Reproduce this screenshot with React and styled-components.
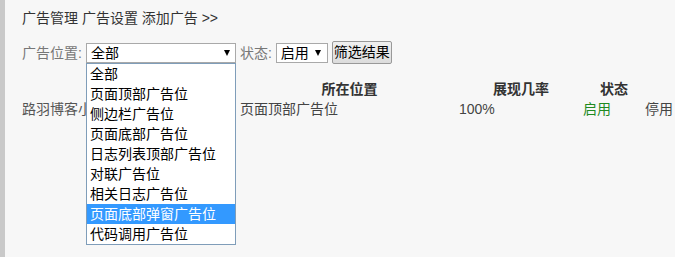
import React from "react";
import styled, { createGlobalStyle } from "styled-components";

const GlobalStyle = createGlobalStyle`
  html, body {
    margin: 0;
    padding: 0;
    background: #f7f7f7;
  }
  body {
    font-family: "Liberation Sans", "Noto Sans CJK SC", sans-serif;
    font-size: 14px;
    color: #333;
  }
`;

const positions = [
  "全部",
  "页面顶部广告位",
  "侧边栏广告位",
  "页面底部广告位",
  "日志列表顶部广告位",
  "对联广告位",
  "相关日志广告位",
  "页面底部弹窗广告位",
  "代码调用广告位",
];

const App = () => {
  return (
    <>
      <GlobalStyle />
      <StPage>
        <StCrumbs>广告管理 广告设置 添加广告 &gt;&gt;</StCrumbs>

        <StFilterBar>
          <StLabel>广告位置:</StLabel>
          <StSelectWrap>
            <StSelect $width={150}>
              <span>全部</span>
              <StArrow />
            </StSelect>
            {/* opened list, lies over the table */}
            <StOptions>
              {positions.map((p, i) => (
                <StOption key={p} $active={i === 7}>
                  {p}
                </StOption>
              ))}
            </StOptions>
          </StSelectWrap>
          <StLabel>状态:</StLabel>
          <StSelect $width={52} $tight>
            <span>启用</span>
            <StArrow />
          </StSelect>
          <StButton>筛选结果</StButton>
        </StFilterBar>

        <StTable>
          <StHead />
          <StHead>所在位置</StHead>
          <StHead>展现几率</StHead>
          <StHead>状态</StHead>
          <StHead />

          <StCell $color="#555">路羽博客小工具</StCell>
          <StCell>页面顶部广告位</StCell>
          <StCell>100%</StCell>
          <StCell $color="#1f8a1f">启用</StCell>
          <StCell>停用</StCell>
        </StTable>
      </StPage>
    </>
  );
};

export default App;

const StPage = styled.div`
  min-height: 257px;
  box-sizing: border-box;
  border-left: 5px solid #c9c9c9;
  padding: 10px 0 0 17px;
  overflow: hidden;
`;

const StCrumbs = styled.div`
  line-height: 16px;
  color: #333;
`;

const StFilterBar = styled.div`
  display: flex;
  align-items: center;
  gap: 4px;
  margin-top: 15px;
  height: 23px;
`;

const StLabel = styled.span`
  color: #777;
  line-height: 16px;
`;

const StSelectWrap = styled.div`
  position: relative;
`;

const StSelect = styled.div`
  box-sizing: border-box;
  width: ${(p) => p.$width}px;
  height: 20px;
  display: flex;
  align-items: center;
  justify-content: ${(p) => (p.$tight ? "flex-start" : "space-between")};
  gap: 6px;
  padding: 0 5px 0 4px;
  background: #fff;
  border: 1px solid #a9a9a9;
  color: #000;
  line-height: 18px;
`;

const StArrow = styled.i`
  width: 0;
  height: 0;
  border-left: 3.5px solid transparent;
  border-right: 3.5px solid transparent;
  border-top: 6px solid #000;
`;

const StOptions = styled.div`
  position: absolute;
  top: 100%;
  left: 0;
  z-index: 10;
  box-sizing: border-box;
  width: 150px;
  background: #fff;
  border: 1px solid #7f9db9;
`;

const StOption = styled.div`
  height: 20px;
  line-height: 20px;
  padding-left: 3px;
  white-space: nowrap;
  color: ${(p) => (p.$active ? "#fff" : "#000")};
  background: ${(p) => (p.$active ? "#3399ff" : "transparent")};
`;

const StButton = styled.button`
  box-sizing: border-box;
  height: 23px;
  padding: 0 1px;
  margin: 0;
  font: inherit;
  line-height: 19px;
  color: #000;
  background: linear-gradient(#f0f0f0, #dcdcdc);
  border: 1px solid #999;
  border-radius: 2px;
`;

const StTable = styled.div`
  display: grid;
  grid-template-columns: 218px 219px 124px 62px 1fr;
  grid-auto-rows: 20px;
  margin-top: 15px;
  align-items: center;
`;

const StHead = styled.div`
  text-align: center;
  font-weight: bold;
  color: #333;
  line-height: 20px;
  white-space: nowrap;
`;

const StCell = styled.div`
  color: ${(p) => p.$color || "#444"};
  line-height: 20px;
  white-space: nowrap;
  overflow: hidden;
`;
